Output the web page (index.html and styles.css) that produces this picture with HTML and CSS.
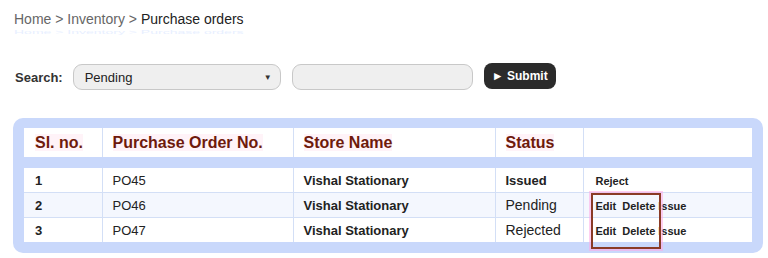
FILE: index.html
```html
<!DOCTYPE html>
<html lang="en">
<head>
  <meta charset="UTF-8" />
  <title>Purchase orders</title>
  <link rel="stylesheet" href="styles.css">
</head>
<body>
  <div class="crumbs">
    <a href="#">Home</a> &gt; <a href="#">Inventory</a> &gt; <span class="current">Purchase orders</span>
  </div>
  <div class="crumbs-ghost">Home &gt; Inventory &gt; Purchase orders</div>

  <form class="search">
    <label>Search:</label>
    <div class="select">
      <span>Pending</span>
      <span class="arrow">&#9660;</span>
    </div>
    <input type="text" class="text-box" />
    <button type="button">&#9658; Submit</button>
  </form>

  <div class="panel">
    <table class="grid head">
      <colgroup>
        <col class="c1"><col class="c2"><col class="c3"><col class="c4"><col class="c5">
      </colgroup>
      <tr>
        <th><span>Sl. no.</span></th>
        <th><span>Purchase Order No.</span></th>
        <th><span>Store Name</span></th>
        <th><span>Status</span></th>
        <th></th>
      </tr>
    </table>

    <table class="grid body">
      <colgroup>
        <col class="c1"><col class="c2"><col class="c3"><col class="c4"><col class="c5">
      </colgroup>
      <tr>
        <td class="b">1</td>
        <td>PO45</td>
        <td class="b">Vishal Stationary</td>
        <td class="b">Issued</td>
        <td class="actions"><a href="#">Reject</a></td>
      </tr>
      <tr class="alt">
        <td class="b">2</td>
        <td>PO46</td>
        <td class="b">Vishal Stationary</td>
        <td class="status">Pending</td>
        <td class="actions"><a href="#">Edit</a><a href="#" class="del">Delete</a><a href="#">Issue</a></td>
      </tr>
      <tr>
        <td class="b">3</td>
        <td>PO47</td>
        <td class="b">Vishal Stationary</td>
        <td class="status">Rejected</td>
        <td class="actions"><a href="#">Edit</a><a href="#" class="del">Delete</a><a href="#">Issue</a></td>
      </tr>
    </table>

    <!-- highlight box drawn over the edit/delete links -->
    <div class="mark"></div>
  </div>
</body>
</html>
```

FILE: styles.css
```css
body {
  font-family: "Liberation Sans", Arial, sans-serif;
  margin: 0;
  background: #fff;
  color: #222;
}

.crumbs {
  padding: 11px 0 0 14px;
  font-size: 14px;
  line-height: 16px;
  color: #666;
}

.crumbs a {
  color: #666;
  text-decoration: none;
}

.crumbs .current {
  color: #222;
}

.crumbs-ghost {
  margin: 2px 0 0 14px;
  font-size: 14px;
  line-height: 16px;
  color: #e8efff;
  transform: scaleY(0.4);
  transform-origin: left top;
}

.search {
  display: flex;
  align-items: center;
  margin: 19px 0 0 15px;
}

.search label {
  font-size: 13px;
  font-weight: bold;
  color: #333;
  margin-right: 10px;
}

.select {
  display: flex;
  justify-content: space-between;
  align-items: center;
  box-sizing: border-box;
  width: 208px;
  height: 26px;
  padding: 0 8px 0 11px;
  background: #efefef;
  border: 1px solid #c8c8c8;
  border-radius: 9px;
  font-size: 13px;
  color: #222;
}

.select .arrow {
  font-size: 8px;
  color: #333;
}

.text-box {
  box-sizing: border-box;
  width: 181px;
  height: 26px;
  margin-left: 11px;
  background: #efefef;
  border: 1px solid #c8c8c8;
  border-radius: 9px;
}

button {
  margin-left: 11px;
  height: 26px;
  width: 72px;
  padding: 0;
  background-color: #2b2b2b;
  color: white;
  font-family: "Liberation Sans", Arial, sans-serif;
  font-size: 12px;
  font-weight: bold;
  border: none;
  border-radius: 8px;
  position: relative;
  top: -1px;
}

.panel {
  position: relative;
  margin: 28px 0 0 13px;
  width: 728px;
  padding: 10px 11px 11px;
  background: #c9d8fb;
  border-radius: 10px;
}

.grid {
  width: 100%;
  border-collapse: collapse;
  table-layout: fixed;
  background: #fff;
}

.c1 { width: 78px; }
.c2 { width: 191px; }
.c3 { width: 202px; }
.c4 { width: 88px; }

.grid th,
.grid td {
  text-align: left;
  padding: 0 0 0 10px;
  border-left: 1px solid #d3dff6;
  white-space: nowrap;
}

.grid th:first-child,
.grid td:first-child {
  border-left: none;
  padding-left: 11px;
}

.head th {
  height: 29px;
  font-size: 16px;
  font-weight: bold;
  color: #6e1a0c;
}

.head th span {
  background: #fff3f8;
}

.body {
  margin-top: 11px;
}

.body td {
  height: 24px;
  font-size: 13px;
  border-top: 1px solid #d3dff6;
}

.body tr:first-child td {
  border-top: none;
}

.body tr.alt td {
  background: #f4f7fe;
}

.body td.b {
  font-weight: bold;
}

.body td.status {
  font-size: 14px;
}

.actions {
  padding-left: 12px !important;
}

.actions a {
  font-size: 11px;
  font-weight: bold;
  color: #222;
  text-decoration: none;
  margin-right: 6px;
}

.actions a.del {
  margin-right: 3px;
}

.mark {
  position: absolute;
  left: 578px;
  top: 75px;
  width: 66px;
  height: 52px;
  border: 2px solid #8a3b26;
  box-shadow: 0 0 0 2px rgba(255, 170, 230, 0.55);
}
```
